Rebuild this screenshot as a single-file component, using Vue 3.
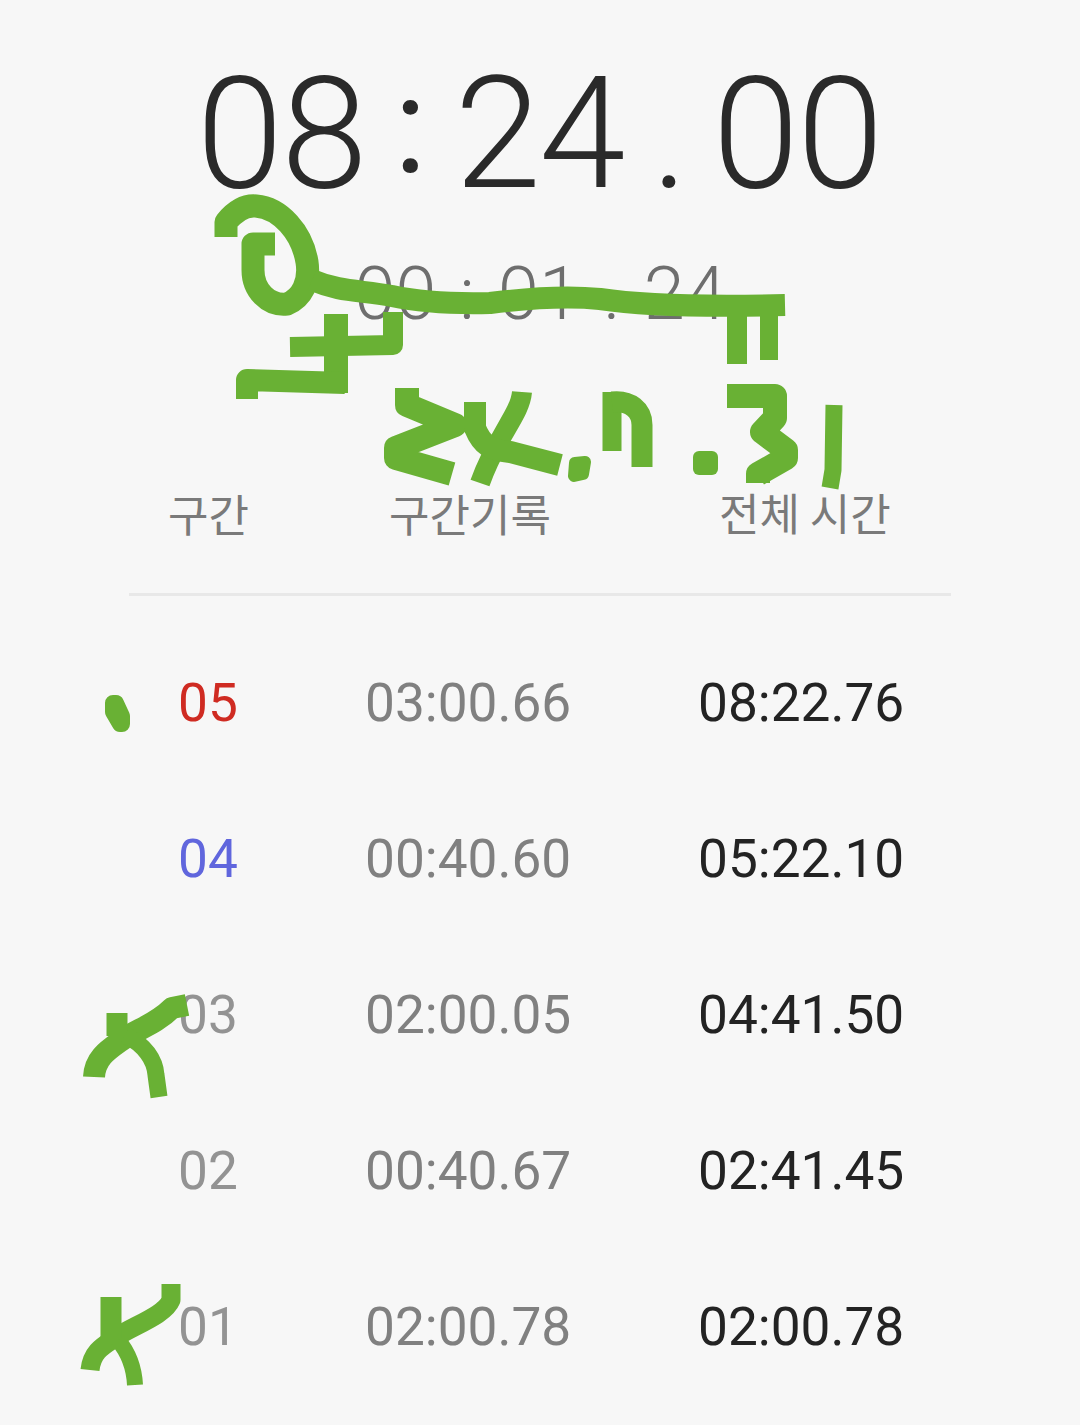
<script setup>
// 구간 기록 (최신 구간이 위로)
const laps = [
  { no: "05", lap: "03:00.66", total: "08:22.76", tone: "slowest" },
  { no: "04", lap: "00:40.60", total: "05:22.10", tone: "fastest" },
  { no: "03", lap: "02:00.05", total: "04:41.50", tone: "" },
  { no: "02", lap: "00:40.67", total: "02:41.45", tone: "" },
  { no: "01", lap: "02:00.78", total: "02:00.78", tone: "" },
];

// 사진 위에 손으로 그린 낙서
const scribbles = [
  { w: 23, d: "M226 237 L226 222 C236 210 246 205 256 206 C280 208 302 232 307 262 C310 282 302 298 287 304 C268 306 253 290 253 270 L253 244 L275 244" },
  { w: 22, d: "M312 280 C340 292 360 290 392 296 C420 302 450 304 490 303 C530 298 570 296 600 299 C640 305 700 307 785 305" },
  { w: 20, d: "M737 312 L737 364" },
  { w: 18, d: "M769 312 L769 360" },
  { w: 20, d: "M393 312 L393 345 L290 347" },
  { w: 24, d: "M336 314 L336 393" },
  { w: 22, d: "M247 399 L247 380 L345 383" },
  { w: 24, d: "M407 388 L407 405 L455 425 L396 448 L396 458 L445 472 L452 474" },
  { w: 20, d: "M522 392 C520 415 497 435 480 483" },
  { w: 22, d: "M475 402 L475 428 C482 445 490 450 510 452 L560 465" },
  { w: 12, d: "M575 463 L585 462 L583 474 L574 476 Z" },
  { w: 19, d: "M612 392 L612 451" },
  { w: 21, d: "M612 402 C630 400 642 410 642 425 L642 467" },
  { w: 12, d: "M699 457 L712 457 L712 469 L699 469 Z" },
  { w: 24, d: "M727 396 L775 396 L775 418 L762 432 L786 450 L786 458 L758 474 L758 483" },
  { w: 17, d: "M834 405 L833 470 L830 488" },
  { w: 16, d: "M113 703 L116 703 L122 716 L122 724 L120 724 L113 712 Z" },
  { w: 22, d: "M187 1005 L172 1008 C155 1025 135 1030 122 1040 C108 1050 95 1058 94 1077" },
  { w: 21, d: "M117 1013 L117 1036" },
  { w: 17, d: "M125 1035 C145 1045 155 1060 156 1075 L159 1097" },
  { w: 19, d: "M171 1284 L171 1300 C165 1315 135 1325 118 1336 C105 1345 92 1350 90 1370" },
  { w: 21, d: "M111 1297 L111 1340" },
  { w: 16, d: "M118 1340 C128 1352 134 1365 135 1385" },
];
</script>

<template>
  <div class="screen">
    <div class="main-time">
      <span class="pair">08</span>
      <span class="sep colon">:</span>
      <span class="pair">24</span>
      <span class="sep dot">.</span>
      <span class="pair">00</span>
    </div>

    <div class="lap-time">00 : 01 . 24</div>

    <div class="head">
      <span>구간</span>
      <span>구간기록</span>
      <span class="head-total">전체 시간</span>
    </div>
    <div class="divider"></div>

    <div class="list">
      <div v-for="row in laps" :key="row.no" class="row">
        <span class="no" :class="row.tone">{{ row.no }}</span>
        <span class="lap">{{ row.lap }}</span>
        <span class="total">{{ row.total }}</span>
      </div>
    </div>

    <svg class="ink" width="1080" height="1425" viewBox="0 0 1080 1425">
      <path
        v-for="(s, i) in scribbles"
        :key="i"
        :d="s.d"
        :stroke-width="s.w"
        fill="none"
        stroke="#69b134"
        stroke-linejoin="round"
      />
    </svg>
  </div>
</template>

<style scoped>
.screen {
  position: relative;
  width: 1080px;
  height: 1425px;
  overflow: hidden;
  background: #f7f7f7;
  font-family: Roboto, "Noto Sans CJK KR", sans-serif;
}

.main-time {
  display: flex;
  justify-content: center;
  align-items: baseline;
  height: 190px;
  padding-top: 39px;
  padding-right: 2px;
  box-sizing: border-box;
  font-size: 156px;
  line-height: 190px;
  font-weight: 300;
  color: #2a2a2a;
}

.pair {
  letter-spacing: -2px;
}

.sep {
  text-align: center;
  box-sizing: border-box;
}

.colon {
  width: 89px;
  padding-left: 1px;
  font-size: 135px;
  font-weight: 400;
  position: relative;
  top: -15px;
}

.dot {
  width: 89px;
  padding-left: 4px;
}

.lap-time {
  margin-top: 61px;
  height: 86px;
  line-height: 86px;
  text-align: center;
  font-size: 74px;
  font-weight: 300;
  word-spacing: 5px;
  color: #6e6e6e;
  white-space: pre;
}

.head {
  display: grid;
  grid-template-columns: 221px 330px auto;
  padding-left: 168px;
  margin-top: 151px;
  font-family: "Noto Sans CJK KR", sans-serif;
  font-size: 44px;
  line-height: 50px;
  color: #7a7a7a;
}

.head-total {
  margin-top: -1px;
}

.divider {
  height: 3px;
  margin: 55px 129px 0;
  background: #e8e8e8;
}

.list {
  margin-top: 29px;
}

.row {
  display: grid;
  grid-template-columns: 187px 333px auto;
  align-items: center;
  height: 156px;
  padding-left: 178px;
  font-size: 53.2px;
}

.no {
  color: #939393;
}

.no.slowest {
  color: #cf2b22;
}

.no.fastest {
  color: #6066dd;
}

.lap {
  color: #808080;
}

.total {
  color: #232323;
}

.ink {
  position: absolute;
  top: 0;
  left: 0;
}
</style>
